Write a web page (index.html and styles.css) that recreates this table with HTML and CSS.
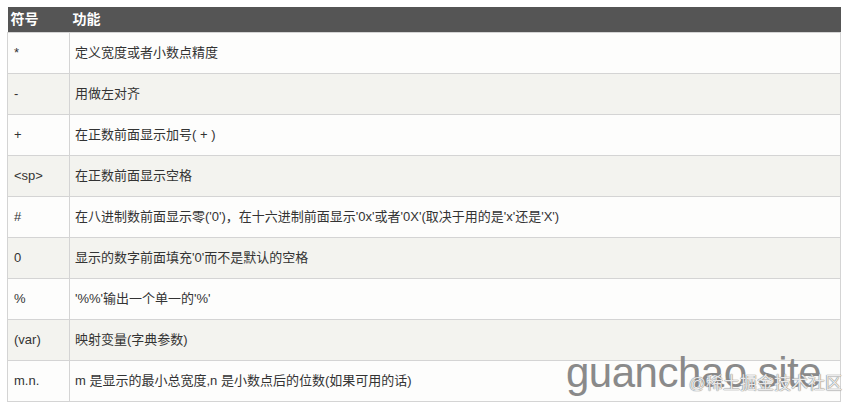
FILE: index.html
```html
<!DOCTYPE html>
<html lang="zh-CN">
<head>
  <meta charset="UTF-8">
  <title>格式化符号</title>
  <link rel="stylesheet" href="styles.css">
</head>
<body>
  <main class="page">
    <table class="ref-table">
      <thead>
        <tr>
          <th class="col-sym">符号</th>
          <th>功能</th>
        </tr>
      </thead>
      <tbody>
        <tr><td>*</td><td>定义宽度或者小数点精度</td></tr>
        <tr><td>-</td><td>用做左对齐</td></tr>
        <tr><td>+</td><td>在正数前面显示加号( + )</td></tr>
        <tr><td>&lt;sp&gt;</td><td>在正数前面显示空格</td></tr>
        <tr><td>#</td><td>在八进制数前面显示零('0')，在十六进制前面显示'0x'或者'0X'(取决于用的是'x'还是'X')</td></tr>
        <tr><td>0</td><td>显示的数字前面填充'0'而不是默认的空格</td></tr>
        <tr><td>%</td><td>'%%'输出一个单一的'%'</td></tr>
        <tr><td>(var)</td><td>映射变量(字典参数)</td></tr>
        <tr><td>m.n.</td><td>m 是显示的最小总宽度,n 是小数点后的位数(如果可用的话)</td></tr>
      </tbody>
    </table>
    <!-- 水印 -->
    <div class="watermark">
      <span class="wm-site">guanchao.site</span>
      <span class="wm-juejin">@稀土掘金技术社区</span>
    </div>
  </main>
</body>
</html>
```

FILE: styles.css
```css
body {
  margin: 0;
  padding: 0;
  background-color: #ffffff;
  font-family: "Liberation Sans", "Noto Sans CJK SC", sans-serif;
}

.page {
  position: relative;
  padding: 7px 7px 0 7px;
  width: 834px;
}

.ref-table {
  width: 834px;
  border-collapse: collapse;
  font-size: 13px;
  color: #333333;
}

.ref-table th {
  background-color: #555555;
  color: #ffffff;
  font-size: 14px;
  font-weight: bold;
  text-align: left;
  height: 25px;
  padding: 0 3px;
  line-height: 25px;
}

.ref-table th.col-sym {
  width: 56px;
}

.ref-table td {
  border: 1px solid #d4d4d4;
  height: 40px;
  padding: 0 5px;
  line-height: 16px;
}

.ref-table td:first-child {
  padding-left: 6px;
}

.ref-table tbody tr:nth-child(odd) {
  background-color: #fdfdfc;
}

.ref-table tbody tr:nth-child(even) {
  background-color: #f3f3ef;
}

.watermark {
  position: absolute;
  right: 20px;
  top: 348px;
  width: 262px;
  height: 50px;
}

.wm-site {
  position: absolute;
  left: 0;
  top: 0;
  font-size: 42px;
  color: #8a8a8a;
  letter-spacing: -0.5px;
  line-height: 50px;
}

.wm-juejin {
  position: absolute;
  right: -14px;
  top: 24px;
  font-size: 17px;
  color: rgba(255, 255, 255, 0.85);
  text-shadow: 0 0 1px #777777, 0 0 1px #777777;
  line-height: 24px;
}
```
